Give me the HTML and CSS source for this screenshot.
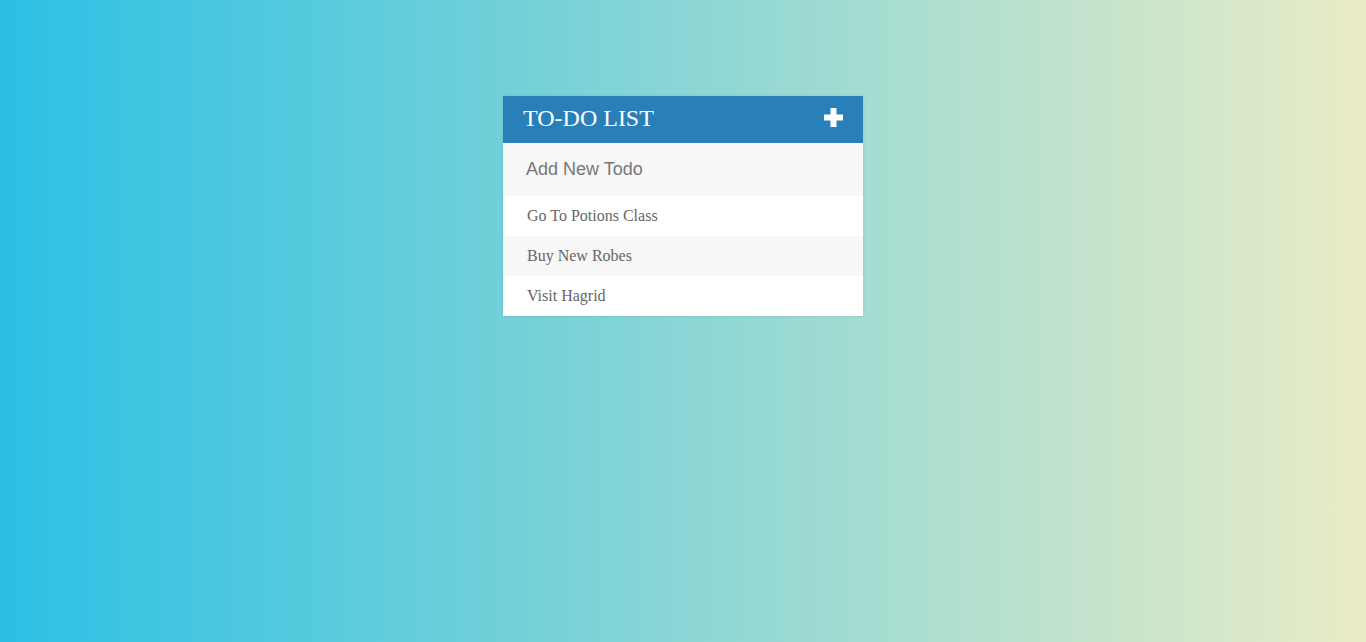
FILE: index.html
```html
<!DOCTYPE html>
<html>
<head>
<meta charset="utf-8">
<link rel="stylesheet" href="styles.css">
</head>
<body>
<div class="container">
  <h1 class="title">To-Do List
    <svg class="plus" viewBox="0 0 19 19" width="19" height="19"><path d="M6.5 0h6v6.5h6.5v6h-6.5v6.5h-6v-6.5h-6.5v-6h6.5z" fill="#fff"/></svg>
  </h1>
  <input class="new-todo" type="text" placeholder="Add New Todo">
  <ul class="todos">
    <li class="todo">Go To Potions Class</li>
    <li class="todo">Buy New Robes</li>
    <li class="todo">Visit Hagrid</li>
  </ul>
</div>
</body>
</html>
```
FILE: styles.css
```css
html, body {
  margin: 0;
  height: 100%;
}
body {
  background: linear-gradient(to right, #2bc0e4, #eaecc6);
  font-family: "Liberation Serif", serif;
}
.container {
  width: 360px;
  margin: 96px auto 0;
  background: #f7f7f7;
  box-shadow: 0 0 3px rgba(0, 0, 0, 0.1);
}
.title {
  margin: 0;
  background: #2980b9;
  color: #fff;
  text-transform: uppercase;
  font-size: 24px;
  font-weight: normal;
  padding: 9px 20px 11px 20px;
  line-height: 27px;
  display: flex;
  align-items: center;
  justify-content: space-between;
}
.plus {
  display: block;
  margin-top: -2px;
}
.new-todo {
  display: block;
  width: 100%;
  box-sizing: border-box;
  font-size: 18px;
  font-family: "Liberation Sans", sans-serif;
  background: #f7f7f7;
  border: none;
  outline: none;
  padding: 13px 13px 13px 23px;
  height: 53px;
  color: #666;
}
.new-todo::placeholder {
  color: #777;
}
.todos {
  list-style: none;
  margin: 0;
  padding: 0;
}
.todo {
  background: #fff;
  height: 40px;
  line-height: 40px;
  color: #666;
  font-size: 16px;
  padding-left: 24px;
}
.todo:nth-child(2n) {
  background: #f7f7f7;
}
```
